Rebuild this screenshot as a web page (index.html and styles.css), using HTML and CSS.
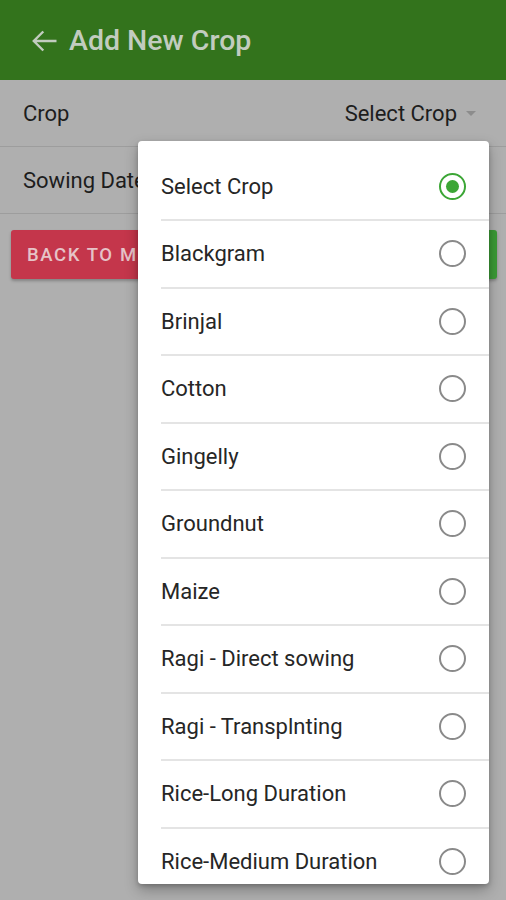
FILE: index.html
```html
<!DOCTYPE html>
<html>
<head>
<meta charset="utf-8">
<link rel="stylesheet" href="styles.css">
</head>
<body>
<div class="screen">
  <header class="appbar">
    <svg class="back" width="25" height="22" viewBox="0 0 25 22"><path d="M1.8 11H24.5M11.3 1.5L1.8 11L11.3 20.5" fill="none" stroke="currentColor" stroke-width="2.4"/></svg>
    <h1 class="title">Add New Crop</h1>
  </header>
  <div class="row">
    <span class="label">Crop</span>
    <span class="picker">Select Crop <span class="caret"></span></span>
  </div>
  <div class="row">
    <span class="label">Sowing Date</span>
  </div>
  <div class="actions">
    <button class="btn btn-red">BACK TO MENU</button>
    <button class="btn btn-green">SAVE</button>
  </div>

  <div class="dialog">
    <ul class="options">
      <li class="option"><span>Select Crop</span><span class="radio checked"></span></li>
      <li class="option"><span>Blackgram</span><span class="radio"></span></li>
      <li class="option"><span>Brinjal</span><span class="radio"></span></li>
      <li class="option"><span>Cotton</span><span class="radio"></span></li>
      <li class="option"><span>Gingelly</span><span class="radio"></span></li>
      <li class="option"><span>Groundnut</span><span class="radio"></span></li>
      <li class="option"><span>Maize</span><span class="radio"></span></li>
      <li class="option"><span>Ragi - Direct sowing</span><span class="radio"></span></li>
      <li class="option"><span>Ragi - Transplnting</span><span class="radio"></span></li>
      <li class="option"><span>Rice-Long Duration</span><span class="radio"></span></li>
      <li class="option"><span>Rice-Medium Duration</span><span class="radio"></span></li>
    </ul>
  </div>
</div>
</body>
</html>
```
FILE: styles.css
```css
* { box-sizing: border-box; }
html, body { margin: 0; padding: 0; }
body {
  font-family: Roboto, "Liberation Sans", sans-serif;
  background: #afafaf;
}
.screen {
  position: relative;
  width: 506px;
  height: 900px;
  overflow: hidden;
  background: #afafaf;
}
.appbar {
  height: 80px;
  background: #33731c;
  display: flex;
  align-items: center;
  padding-left: 32px;
  gap: 12px;
  color: #c2ccbf;
}
.back { display: block; margin-top: 1px; }
.title {
  margin: 0;
  font-size: 28.5px;
  font-weight: 500;
  color: #c2ccbf;
}
.row {
  height: 67px;
  border-bottom: 1px solid #9d9d9d;
  display: flex;
  align-items: center;
  justify-content: space-between;
  padding: 0 30px 0 23px;
  font-size: 22px;
  color: #1d1d1d;
}
.picker {
  display: flex;
  align-items: center;
  gap: 9px;
}
.caret {
  width: 0; height: 0;
  border-left: 5.5px solid transparent;
  border-right: 5.5px solid transparent;
  border-top: 5.5px solid #8c8c8c;
}
.actions {
  display: flex;
  gap: 16px;
  padding: 16px 9px 0 11px;
}
.btn {
  flex: 1;
  height: 49px;
  border: none;
  border-radius: 3px;
  font-family: Roboto, "Liberation Sans", sans-serif;
  font-size: 18.5px;
  font-weight: 500;
  letter-spacing: 1.6px;
  text-align: left;
  padding-left: 16px;
  box-shadow: 0 2px 3px rgba(0,0,0,0.25);
}
.btn-red { background: #c4364b; color: #e6c3c8; }
.btn-green { background: #3b9a36; color: #d0e6cd; }
.dialog {
  position: absolute;
  top: 141px;
  left: 138px;
  width: 351px;
  height: 743px;
  background: #fff;
  border-radius: 4px;
  overflow: hidden;
  box-shadow: 0 6px 14px rgba(0,0,0,0.28), 0 2px 4px rgba(0,0,0,0.18);
}
.options {
  list-style: none;
  margin: 0;
  padding: 12.5px 0 0 0;
}
.option {
  height: 67.5px;
  margin-left: 23px;
  padding-right: 23px;
  border-bottom: 2px solid #e4e4e4;
  display: flex;
  align-items: center;
  justify-content: space-between;
  font-size: 22px;
  color: #262626;
}
.radio {
  width: 27px;
  height: 27px;
  border-radius: 50%;
  border: 2px solid #8a8a8a;
  display: flex;
  align-items: center;
  justify-content: center;
}
.radio.checked { border-color: #3ca636; }
.radio.checked::after {
  content: "";
  width: 13px;
  height: 13px;
  border-radius: 50%;
  background: #3ca636;
}
```
